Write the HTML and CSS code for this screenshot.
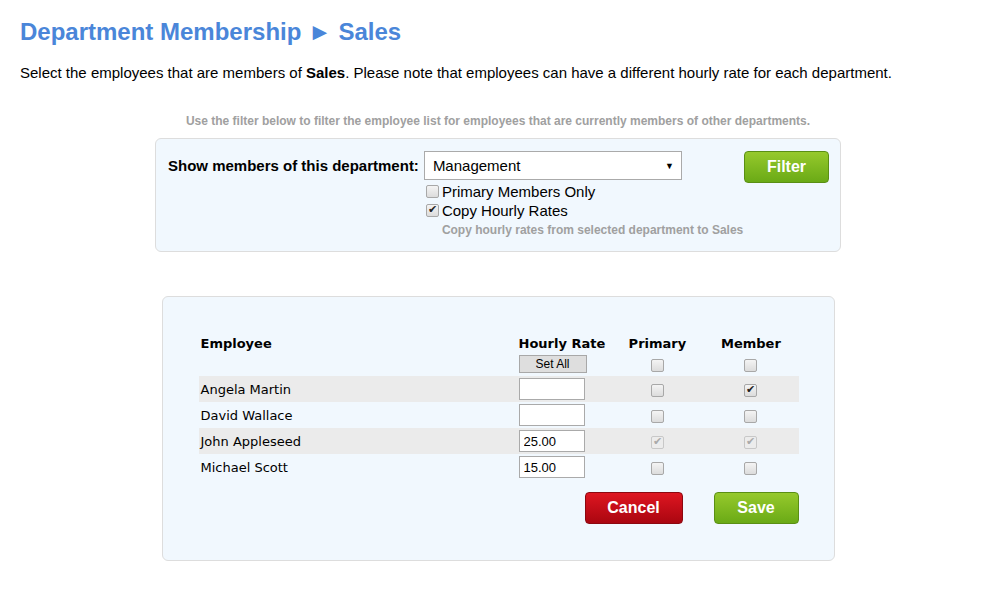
FILE: index.html
```html
<!DOCTYPE html>
<html lang="en">
<head>
    <meta charset="UTF-8">
    <title>Department Membership</title>
    <link rel="stylesheet" href="styles.css">
</head>
<body>
    <h1 class="page-title">Department Membership &#9658; Sales</h1>
    <p class="intro">Select the employees that are members of <strong>Sales</strong>. Please note that employees can have a different hourly rate for each department.</p>

    <p class="hint">Use the filter below to filter the employee list for employees that are currently members of other departments.</p>

    <form class="filter-box">
        <label class="filter-label" for="dept">Show members of this department:</label>
        <div class="filter-options">
            <div class="select-box" id="dept">
                <span>Management</span>
                <span class="select-arrow">&#9660;</span>
            </div>
            <label class="check-line"><input type="checkbox" class="check">Primary Members Only</label>
            <label class="check-line"><input type="checkbox" class="check" checked>Copy Hourly Rates</label>
            <div class="filter-note">Copy hourly rates from selected department to Sales</div>
        </div>
        <button type="button" class="btn btn-green btn-filter">Filter</button>
    </form>

    <form class="members-box">
        <table class="members">
            <thead>
                <tr>
                    <th class="col-emp">Employee</th>
                    <th class="col-rate">Hourly Rate</th>
                    <th class="col-center">Primary</th>
                    <th class="col-center">Member</th>
                </tr>
                <tr class="set-row">
                    <td></td>
                    <td><button type="button" class="set-all">Set All</button></td>
                    <td class="col-center"><input type="checkbox" class="check"></td>
                    <td class="col-center"><input type="checkbox" class="check"></td>
                </tr>
            </thead>
            <tbody>
                <tr class="alt">
                    <td>Angela Martin</td>
                    <td><input type="text" class="rate"></td>
                    <td class="col-center"><input type="checkbox" class="check"></td>
                    <td class="col-center"><input type="checkbox" class="check" checked></td>
                </tr>
                <tr>
                    <td>David Wallace</td>
                    <td><input type="text" class="rate"></td>
                    <td class="col-center"><input type="checkbox" class="check"></td>
                    <td class="col-center"><input type="checkbox" class="check"></td>
                </tr>
                <tr class="alt">
                    <td>John Appleseed</td>
                    <td><input type="text" class="rate" value="25.00"></td>
                    <td class="col-center"><input type="checkbox" class="check" checked disabled></td>
                    <td class="col-center"><input type="checkbox" class="check" checked disabled></td>
                </tr>
                <tr>
                    <td>Michael Scott</td>
                    <td><input type="text" class="rate" value="15.00"></td>
                    <td class="col-center"><input type="checkbox" class="check"></td>
                    <td class="col-center"><input type="checkbox" class="check"></td>
                </tr>
            </tbody>
        </table>
        <div class="actions">
            <button type="button" class="btn btn-red btn-cancel">Cancel</button>
            <button type="button" class="btn btn-green btn-save">Save</button>
        </div>
    </form>
</body>
</html>
```

FILE: styles.css
```css
* {
    margin: 0;
    padding: 0;
    box-sizing: border-box;
}

body {
    font-family: 'Liberation Sans', Arial, sans-serif;
    color: #000;
    background: #fff;
    padding: 18px 22px 18px 20px;
}

.page-title {
    color: #4a86d9;
    font-size: 24px;
    font-weight: bold;
    line-height: 28px;
}

.intro {
    font-size: 15px;
    margin-top: 18px;
}

.hint {
    text-align: center;
    color: #a0a0a0;
    font-size: 12px;
    font-weight: bold;
    margin-top: 33px;
}

.filter-box {
    width: 686px;
    margin: 10px auto 0;
    background: #f1f8fe;
    border: 1px solid #ddd;
    border-radius: 6px;
    padding: 12px 11px 14px 12px;
    display: flex;
    align-items: flex-start;
}

.filter-label {
    font-size: 15px;
    font-weight: bold;
    line-height: 29px;
    margin-right: 5px;
    white-space: nowrap;
    flex-shrink: 0;
}

.filter-options {
    display: flex;
    flex-direction: column;
    flex-shrink: 0;
}

.select-box {
    width: 258px;
    height: 29px;
    background: #fff;
    border: 1px solid #aaa;
    font-size: 15px;
    display: flex;
    align-items: center;
    justify-content: space-between;
    padding: 0 7px 0 8px;
    margin-bottom: 2px;
}

.select-arrow {
    font-size: 9px;
}

.check-line {
    font-size: 15px;
    line-height: 19px;
    display: flex;
    align-items: center;
    gap: 3px;
    padding-left: 2px;
    white-space: nowrap;
}

.check {
    appearance: none;
    width: 13px;
    height: 13px;
    border: 1px solid #a8a8a8;
    border-radius: 2px;
    background: linear-gradient(#f4f4f4, #dcdcdc);
    position: relative;
    vertical-align: middle;
}

.check:checked::after {
    content: '\2714';
    position: absolute;
    left: 1px;
    top: -2px;
    font-size: 11px;
    color: #222;
}

.check:disabled {
    border-color: #c8c8c8;
    background: #ececec;
}

.check:disabled::after {
    color: #aaa;
}

.filter-note {
    color: #a0a0a0;
    font-size: 12px;
    font-weight: bold;
    margin: 3px 0 0 18px;
    white-space: nowrap;
}

.btn {
    font-family: 'Liberation Sans', Arial, sans-serif;
    font-weight: bold;
    color: #fff;
    font-size: 16px;
    border-radius: 4px;
    cursor: pointer;
}

.btn-green {
    background: linear-gradient(#96c92c, #6aaa16);
    border: 1px solid #5a8f14;
}

.btn-red {
    background: linear-gradient(#de1621, #aa0610);
    border: 1px solid #8c0810;
}

.btn-filter {
    width: 85px;
    height: 32px;
    margin-left: auto;
}

.members-box {
    width: 673px;
    margin: 44px auto 0;
    background: #f1f8fe;
    border: 1px solid #ddd;
    border-radius: 6px;
    padding: 36px 36px 36px;
}

.members {
    width: 600px;
    border-collapse: collapse;
    font-family: 'DejaVu Sans', Verdana, sans-serif;
    font-size: 13px;
}

.members th {
    text-align: left;
    font-weight: bold;
    padding: 3px 2px 3px;
    height: 20px;
}

.members td {
    padding: 0 2px;
    height: 26px;
}

.members .col-emp {
    width: 318px;
}

.members .col-rate {
    width: 95px;
}

.members .col-center {
    text-align: center;
}

.members .set-row td {
    height: 22px;
    padding-bottom: 2px;
}

.members tr.alt {
    background: #ebebeb;
}

.set-all {
    font-family: 'Liberation Sans', Arial, sans-serif;
    font-size: 12px;
    width: 68px;
    height: 18px;
    background: #dedede;
    border: 1px solid #a8a8a8;
}

.rate {
    width: 66px;
    height: 22px;
    border: 1px solid #aaa;
    font-family: 'Liberation Sans', Arial, sans-serif;
    font-size: 13px;
    padding: 0 4px;
    vertical-align: middle;
}

.actions {
    display: flex;
    justify-content: flex-end;
    gap: 31px;
    width: 600px;
    margin-top: 12px;
}

.btn-cancel {
    width: 98px;
    height: 32px;
}

.btn-save {
    width: 85px;
    height: 32px;
}
```
